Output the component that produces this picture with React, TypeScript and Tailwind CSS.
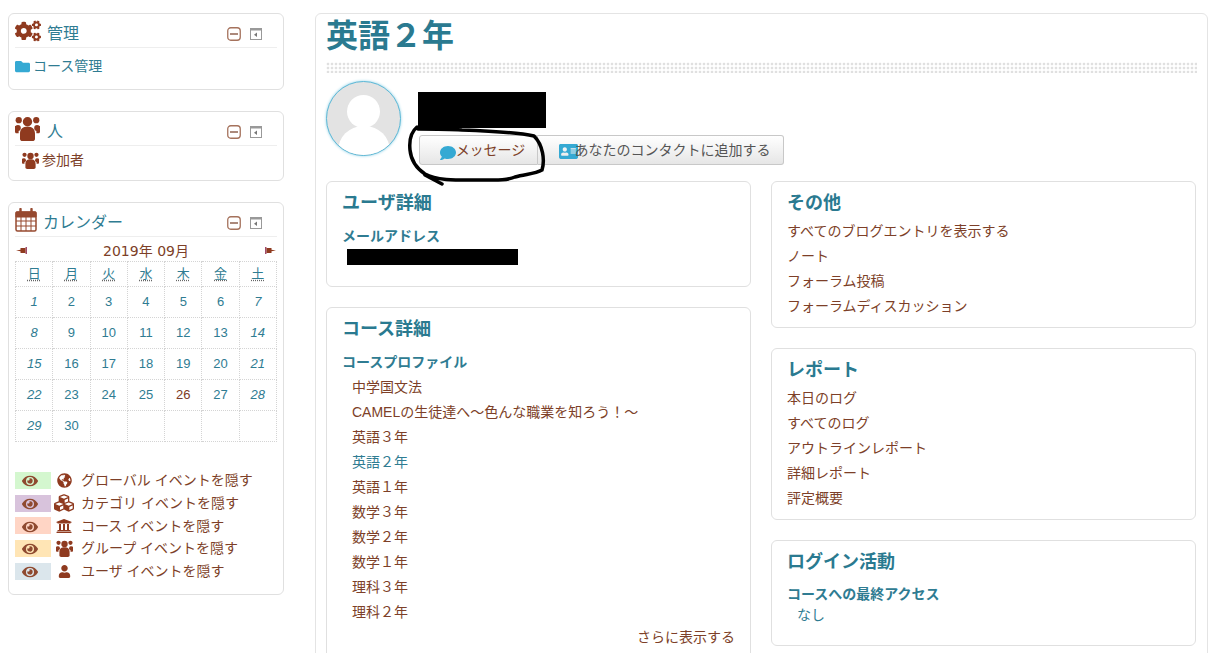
import type { ReactNode } from 'react';
import {
  FaAddressCard,
  FaCogs,
  FaComment,
  FaCubes,
  FaEye,
  FaFolder,
  FaGlobeAmericas,
  FaUniversity,
  FaUser,
} from 'react-icons/fa';

const font = 'font-["Liberation_Sans","Noto_Sans_CJK_JP",sans-serif]';

function BlockControls() {
  return (
    <div className="mt-[6px] mr-[15px] ml-auto flex items-center gap-[9px]">
      <svg width="14" height="14" viewBox="0 0 14 14">
        <rect x="0.75" y="0.75" width="12.5" height="12.5" rx="3" fill="#fff" stroke="#a5725c" strokeWidth="1.3" />
        <path d="M3 7h8" stroke="#7d4a34" strokeWidth="1.3" />
      </svg>
      <svg width="12" height="12" viewBox="0 0 12 12">
        <rect x="0.5" y="0.5" width="11" height="11" fill="#fff" stroke="#999" />
        <rect x="0.5" y="0.5" width="11" height="2" fill="#999" />
        <path d="M7 4.5 4 6.8 7 9z" fill="#777" />
      </svg>
    </div>
  );
}

function Block({
  icon,
  title,
  gap,
  className,
  children,
}: {
  icon: ReactNode;
  title: string;
  gap: string;
  className: string;
  children: ReactNode;
}) {
  return (
    <section className={`rounded-md border border-[#e0e0e0] px-[6px] ${className}`}>
      <div className={`flex h-[34px] items-center border-b border-[#eeeeee] text-base text-[#2f7c92] ${gap}`}>
        {icon}
        <span className="mt-[6px]">{title}</span>
        <BlockControls />
      </div>
      {children}
    </section>
  );
}

// the older three-person glyph: taller than the one in the icon package
function UsersIcon({ size, className }: { size: number; className?: string }) {
  return (
    <svg width={size} height={size} viewBox="0 0 24 24" fill="currentColor" className={className}>
      <circle cx="12" cy="5.5" r="4.5" />
      <circle cx="3.6" cy="4" r="3" />
      <circle cx="20.4" cy="4" r="3" />
      <circle cx="2.8" cy="11.5" r="2.8" />
      <circle cx="21.2" cy="11.5" r="2.8" />
      <path d="M4.8 17c0-5 3-6.8 7.2-6.8s7.2 1.800 7.200 6.800v5c0 1-1 2-2.500 2h-9.400c-1.500 0-2.500-1-2.500-2z" />
      <path d="M0 9.500h3.500v7H1.500c-1 0-1.500-.8-1.500-1.500zM24 9.500h-3.500v7h2c1 0 1.500-.8 1.500-1.500z" />
    </svg>
  );
}

function CalendarIcon() {
  return (
    <svg width="22" height="24" viewBox="0 0 22 24" fill="none" stroke="#96492f">
      <rect x="1" y="4" width="20" height="19" rx="1.5" strokeWidth="1.5" />
      <path d="M1 4h20v5H1z" fill="#96492f" />
      <path d="M1 13h20M1 18h20M6 9v14M11 9v14M16 9v14" strokeWidth="1" />
      <path d="M5.500 1v5M16.500 1v5" strokeWidth="2.400" strokeLinecap="round" />
    </svg>
  );
}

function PinArrow({ flip }: { flip?: boolean }) {
  return (
    <svg width="11" height="7" viewBox="0 0 11 7" className={flip ? '' : 'rotate-180'}>
      <path d="M0 0h1.500v7H0z" fill="#a04a6a" />
      <path d="M1.500 1h5v1.800L11 3.500 6.500 4.200V6h-5z" fill="#8f3a1f" />
    </svg>
  );
}

const weekdays = ['日', '月', '火', '水', '木', '金', '土'];
const weeks = [
  [1, 2, 3, 4, 5, 6, 7],
  [8, 9, 10, 11, 12, 13, 14],
  [15, 16, 17, 18, 19, 20, 21],
  [22, 23, 24, 25, 26, 27, 28],
  [29, 30, 0, 0, 0, 0, 0],
];

function Calendar() {
  return (
    <table className="w-[262px] table-fixed border-collapse text-[13px] text-[#2f7c92]">
      <thead>
        <tr className="h-[25px]">
          {weekdays.map((d) => (
            <th key={d} className="border border-dotted border-[#d4d4d4] p-0 font-normal">
              <span className="underline decoration-dotted decoration-[#666] underline-offset-2">{d}</span>
            </th>
          ))}
        </tr>
      </thead>
      <tbody>
        {weeks.map((week) => (
          <tr key={week[0]} className="h-[31px]">
            {week.map((day, i) => (
              <td
                key={i}
                className={[
                  'border border-dotted border-[#d4d4d4] p-0 pb-[1px] text-center',
                  i === 0 || i === 6 ? 'italic' : '',
                  day === 26 ? 'text-[#7d3a24]' : '',
                ].join(' ')}
              >
                {day || ''}
              </td>
            ))}
          </tr>
        ))}
      </tbody>
    </table>
  );
}

const legend = [
  { color: 'bg-[#d4f7cf]', icon: <FaGlobeAmericas size={15} />, label: 'グローバル イベントを隠す' },
  { color: 'bg-[#d8c3dc]', icon: <FaCubes size={20} />, label: 'カテゴリ イベントを隠す' },
  { color: 'bg-[#ffd5c5]', icon: <FaUniversity size={16} />, label: 'コース イベントを隠す' },
  { color: 'bg-[#ffe5b5]', icon: <UsersIcon size={17} />, label: 'グループ イベントを隠す' },
  { color: 'bg-[#dbe6ec]', icon: <FaUser size={13} />, label: 'ユーザ イベントを隠す' },
];

function Card({ title, className, children }: { title: string; className: string; children: ReactNode }) {
  return (
    <section className={`rounded-md border border-[#e0e0e0] px-[15px] ${className}`}>
      <h3 className="pt-[9px] text-[18px] leading-[24px] font-bold text-[#2a7a90]">{title}</h3>
      {children}
    </section>
  );
}

function Links({ items }: { items: string[] }) {
  return (
    <ul className="mt-[4px] text-sm leading-[25px] text-[#7d3f28]">
      {items.map((item) => (
        <li key={item}>{item}</li>
      ))}
    </ul>
  );
}

const courses = [
  '中学国文法',
  'CAMELの生徒達へ～色んな職業を知ろう！～',
  '英語３年',
  '英語２年',
  '英語１年',
  '数学３年',
  '数学２年',
  '数学１年',
  '理科３年',
  '理科２年',
];

export default function App() {
  return (
    <div className={`flex h-[653px] w-[1208px] gap-[31px] overflow-hidden bg-white pt-[13px] pl-[8px] ${font}`}>
      {/* Left column */}
      <aside className="flex w-[276px] shrink-0 flex-col gap-[21px]">
        <Block
          title="管理"
          gap="gap-[6px]"
          className="h-[77px]"
          icon={<FaCogs size={26} className="text-[#8f3a1f]" />}
        >
          <div className="flex items-center gap-[3px] pt-[8px] text-sm text-[#2f7c92]">
            <FaFolder size={15} className="text-[#35a9d3]" />
            <span>コース管理</span>
          </div>
        </Block>

        <Block
          title="人"
          gap="gap-[7px]"
          className="h-[70px]"
          icon={<UsersIcon size={25} className="text-[#8f3a1f]" />}
        >
          <div className="flex items-center gap-[3px] pt-[4px] pl-[7px] text-sm text-[#7d3f28]">
            <UsersIcon size={17} className="text-[#8f3a1f]" />
            <span>参加者</span>
          </div>
        </Block>

        <Block
          title="カレンダー"
          gap="gap-[6px]"
          className="h-[393px]"
          icon={<CalendarIcon />}
        >
          <div className="flex h-[24px] items-center justify-between px-[1px] pt-[3px] text-sm text-[#7d3f28]">
            <PinArrow />
            <span className='font-["DejaVu_Sans","Noto_Sans_CJK_JP",sans-serif]'>2019年 09月</span>
            <PinArrow flip />
          </div>
          <Calendar />
          <ul className="mt-[27px] text-sm text-[#7d3f28]">
            {legend.map((row) => (
              <li key={row.label} className="flex h-[22.7px] items-center">
                <span className={`flex h-[17px] w-[36px] items-center justify-center pr-[6px] ${row.color}`}>
                  <FaEye size={16} className="mt-[2px] text-[#8f4a30]" />
                </span>
                <span className="flex w-[30px] justify-center pr-[4px] text-[#8f3a1f]">{row.icon}</span>
                <span>{row.label}</span>
              </li>
            ))}
          </ul>
        </Block>
      </aside>

      {/* Main region */}
      <main className="relative h-[700px] w-[893px] shrink-0 rounded-md border border-[#e4e4e4] px-[10px]">
        <h2 className="pt-[2px] text-[32px] leading-[40px] font-bold text-[#2a7a90]">英語２年</h2>
        <div className="mt-[6px] h-[11px] bg-[radial-gradient(#e0e0e0_1.5px,transparent_1.6px)] bg-size-[4px_4px]" />

        <div className="mt-[8px] flex h-[100px]">
          <div className="relative h-[75px] w-[75px] shrink-0 overflow-hidden rounded-full border border-[#5db8d6] bg-[#e3e3e3] shadow-[0_0_3px_#8fd0e6]">
            <div className="absolute top-[13px] left-[20px] h-[33px] w-[33px] rounded-full bg-white" />
            <div className="absolute top-[44px] left-[11px] h-[50px] w-[52px] rounded-full bg-white" />
          </div>
          <div className="ml-[17px] pt-[11px]">
            <div className="h-[36px] w-[128px] bg-black" />
            <div className="mt-[7px] ml-[1px] flex h-[30px] w-[365px] text-sm">
              <button className="flex w-[119px] items-center justify-center rounded-l-[3px] border border-[#c8c8c8] bg-linear-to-b from-white to-[#e6e6e6] pl-[8px] text-[#7d3f28]">
                <FaComment size={16} className="mt-[5px] text-[#35a9d3]" />
                <span>メッセージ</span>
              </button>
              <button className="flex flex-1 items-center justify-center rounded-r-[3px] border border-l-0 border-[#c8c8c8] bg-linear-to-b from-white to-[#e6e6e6] pl-[8px] text-[#555555]">
                <FaAddressCard size={19} className="mt-[2px] -mr-[3px] text-[#35a9d3]" />
                <span>あなたのコンタクトに追加する</span>
              </button>
            </div>
          </div>
        </div>

        <div className="flex gap-[20px]">
          <div className="flex w-[425px] flex-col gap-[20px]">
            <Card title="ユーザ詳細" className="h-[106px]">
              <div className="mt-[11px] text-sm leading-[20px] font-bold text-[#2f7c92]">メールアドレス</div>
              <div className="mt-[3px] ml-[5px] h-[16px] w-[171px] bg-black" />
            </Card>
            <Card title="コース詳細" className="h-[400px]">
              <div className="mt-[11px] text-sm leading-[20px] font-bold text-[#2f7c92]">コースプロファイル</div>
              <ul className="mt-[3px] pl-[10px] text-sm leading-[25px] text-[#7d3f28]">
                {courses.map((c) => (
                  <li key={c} className={c === '英語２年' ? 'text-[#2f7c92]' : ''}>
                    {c}
                  </li>
                ))}
              </ul>
              <div className="text-right text-sm leading-[25px] text-[#7d3f28]">さらに表示する</div>
            </Card>
          </div>

          <div className="flex w-[425px] flex-col gap-[20px]">
            <Card title="その他" className="h-[147px]">
              <Links items={['すべてのブログエントリを表示する', 'ノート', 'フォーラム投稿', 'フォーラムディスカッション']} />
            </Card>
            <Card title="レポート" className="h-[172px]">
              <Links items={['本日のログ', 'すべてのログ', 'アウトラインレポート', '詳細レポート', '評定概要']} />
            </Card>
            <Card title="ログイン活動" className="h-[106px]">
              <div className="mt-[10px] text-sm leading-[20px] font-bold text-[#2f7c92]">コースへの最終アクセス</div>
              <div className="mt-[1px] pl-[10px] text-sm leading-[20px] text-[#2f7c92]">なし</div>
            </Card>
          </div>
        </div>

        {/* hand-drawn circle around the message button */}
        <svg className="pointer-events-none absolute top-[-14px] left-[-316px]" width="1208" height="653" fill="none">
          <path
            d="M417 127 C411 132 409 140 410 150 C411 160 416 168 425 174 C437 181 460 180 480 180 C495 180 505 181 515 177 C525 174 535 174 542 170 C545 160 543 145 534 136 C520 133 490 131 462 130 C448 129 432 129 418 129 M425 175 L442 184"
            stroke="#000"
            strokeWidth="3.500"
            strokeLinecap="round"
          />
        </svg>
      </main>
    </div>
  );
}
